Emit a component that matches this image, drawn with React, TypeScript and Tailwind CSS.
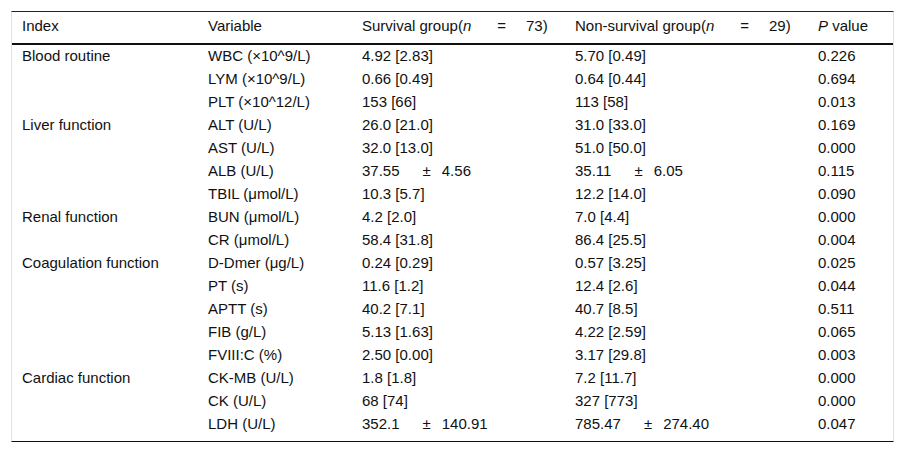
import React from "react";

type Row = { idx?: string; v: string; s: React.ReactNode; n: React.ReactNode; p: string };

const pm = (a: string, b: string) => (
  <span className="whitespace-pre">
    {a}
    <span className="inline-block w-[23px]" />
    {"\u00b1"}
    <span className="inline-block w-[11px]" />
    {b}
  </span>
);

const rows: Row[] = [
  { idx: "Blood routine", v: "WBC (×10^9/L)", s: "4.92 [2.83]", n: "5.70 [0.49]", p: "0.226" },
  { v: "LYM (×10^9/L)", s: "0.66 [0.49]", n: "0.64 [0.44]", p: "0.694" },
  { v: "PLT (×10^12/L)", s: "153 [66]", n: "113 [58]", p: "0.013" },
  { idx: "Liver function", v: "ALT (U/L)", s: "26.0 [21.0]", n: "31.0 [33.0]", p: "0.169" },
  { v: "AST (U/L)", s: "32.0 [13.0]", n: "51.0 [50.0]", p: "0.000" },
  { v: "ALB (U/L)", s: pm("37.55", "4.56"), n: pm("35.11", "6.05"), p: "0.115" },
  { v: "TBIL (μmol/L)", s: "10.3 [5.7]", n: "12.2 [14.0]", p: "0.090" },
  { idx: "Renal function", v: "BUN (μmol/L)", s: "4.2 [2.0]", n: "7.0 [4.4]", p: "0.000" },
  { v: "CR (μmol/L)", s: "58.4 [31.8]", n: "86.4 [25.5]", p: "0.004" },
  { idx: "Coagulation function", v: "D-Dmer (μg/L)", s: "0.24 [0.29]", n: "0.57 [3.25]", p: "0.025" },
  { v: "PT (s)", s: "11.6 [1.2]", n: "12.4 [2.6]", p: "0.044" },
  { v: "APTT (s)", s: "40.2 [7.1]", n: "40.7 [8.5]", p: "0.511" },
  { v: "FIB (g/L)", s: "5.13 [1.63]", n: "4.22 [2.59]", p: "0.065" },
  { v: "FVIII:C (%)", s: "2.50 [0.00]", n: "3.17 [29.8]", p: "0.003" },
  { idx: "Cardiac function", v: "CK-MB (U/L)", s: "1.8 [1.8]", n: "7.2 [11.7]", p: "0.000" },
  { v: "CK (U/L)", s: "68 [74]", n: "327 [773]", p: "0.000" },
  { v: "LDH (U/L)", s: pm("352.1", "140.91"), n: pm("785.47", "274.40"), p: "0.047" },
];

const grid = "grid grid-cols-[185px_154px_213px_243px_86px]";

const Eq = () => (
  <>
    <span className="inline-block w-[26px]" />=<span className="inline-block w-[20px]" />
  </>
);

export default function App() {
  return (
    <div
      className="bg-white w-[905px] h-[453px] pt-[11px] pl-[11px] text-[15px] text-[#111]"
      style={{ fontFamily: '"Liberation Sans", Arial, sans-serif' }}
    >
      <div className="w-[883px] border-l border-r border-l-[#e2e2e2] border-r-[#e2e2e2] border-t border-t-[#222] border-b border-b-[#111]">
        <div className={`${grid} h-[33px] pb-[2px] items-center border-b-2 border-b-[#111]`}>
          <div className="pl-[10px]">Index</div>
          <div className="pl-[11px]">Variable</div>
          <div className="pl-[11px] whitespace-nowrap">
            Survival group(<i>n</i>
            <Eq />
            73)
          </div>
          <div className="pl-[11px] whitespace-nowrap">
            Non-survival group(<i>n</i>
            <Eq />
            29)
          </div>
          <div className="pl-[11px]">
            <i>P</i> value
          </div>
        </div>
        <div className="pb-[5px]">
          {rows.map((r, i) => (
            <div key={i} className={`${grid} h-[23px] items-center`}>
              <div className="pl-[10px] whitespace-nowrap">{r.idx ?? ""}</div>
              <div className="pl-[11px] whitespace-nowrap">{r.v}</div>
              <div className="pl-[11px] whitespace-nowrap">{r.s}</div>
              <div className="pl-[11px] whitespace-nowrap">{r.n}</div>
              <div className="pl-[11px] whitespace-nowrap">{r.p}</div>
            </div>
          ))}
        </div>
      </div>
    </div>
  );
}
